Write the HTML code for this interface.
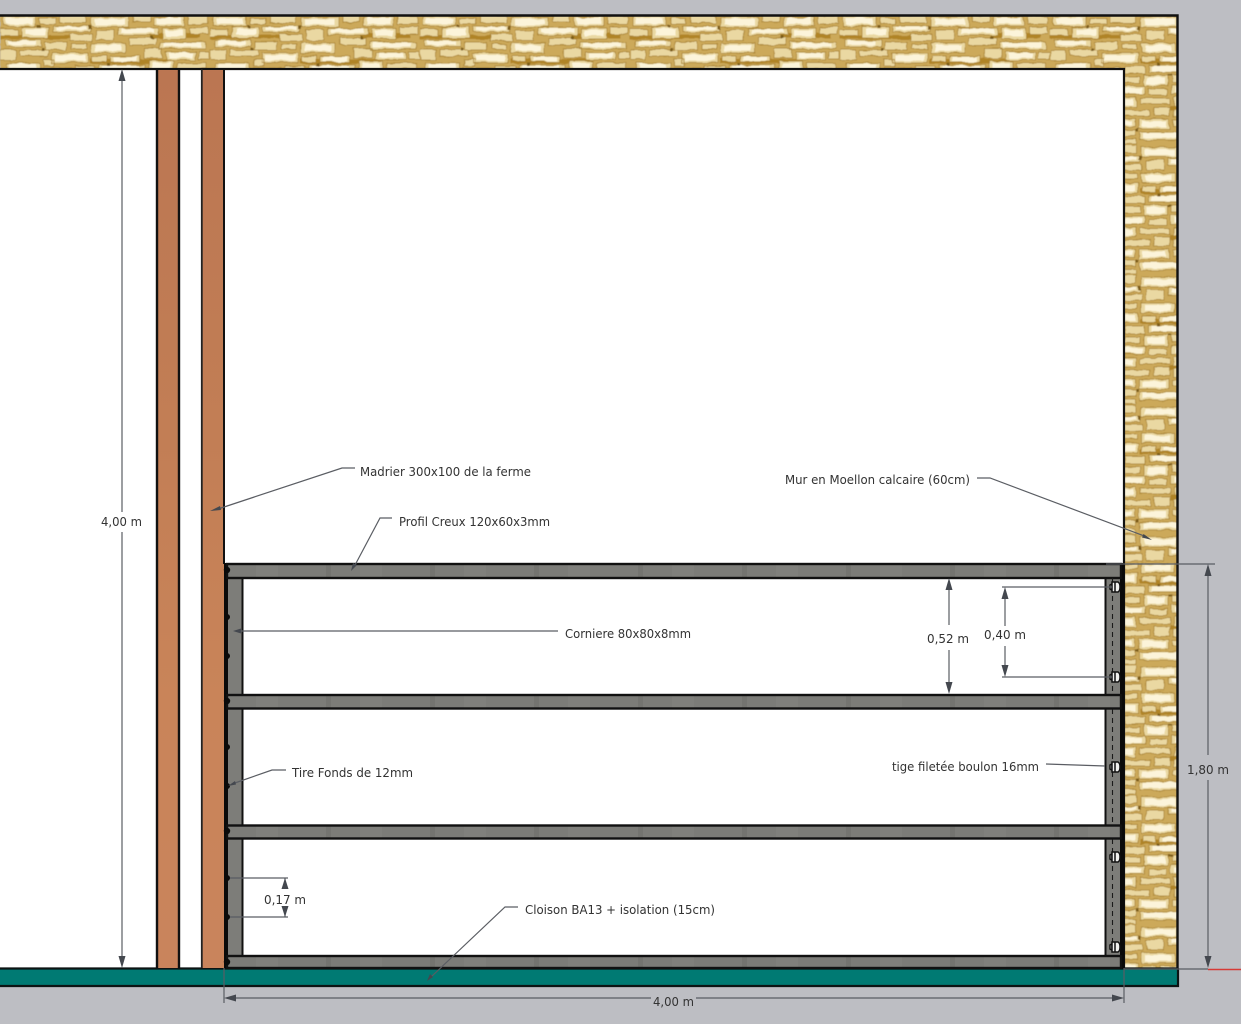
<!DOCTYPE html>
<html lang="fr"><head><meta charset="utf-8"><title>Plan</title>
<style>html,body{margin:0;padding:0;background:#bdbec3;width:1241px;height:1024px;overflow:hidden}svg{display:block;filter:blur(.3px)}text{font-family:"DejaVu Sans","Liberation Sans",sans-serif;font-size:12.5px;fill:#333}</style></head>
<body>
<svg width="1241" height="1024" viewBox="0 0 1241 1024" xmlns="http://www.w3.org/2000/svg">
<defs>
<filter id="b" x="0" y="0" width="100%" height="100%">
<feTurbulence type="fractalNoise" baseFrequency="0.09" numOctaves="2" seed="4" result="n"/>
<feDisplacementMap in="SourceGraphic" in2="n" scale="4" xChannelSelector="R" yChannelSelector="G"/>
<feGaussianBlur stdDeviation="0.6"/>
</filter>
<pattern id="stone" width="210" height="130" patternUnits="userSpaceOnUse" x="0" y="15">
<rect width="210" height="130" fill="#cca95a"/>
<path fill="#b08428" d="M0 20h70v4h-70zM90 44h80v5h-80zM30 72h60v6h-60zM120 90h70v5h-70zM10 112h60v5h-60zM150 18h50v5h-50z"/>
<path fill="#ead8a2" stroke="#a67f2c" stroke-width=".7" d="M3 1h33v10h-33zM40 3h16v6h-16zM60 0h26v8h-26zM91 2h38v10h-38zM133 0h17v7h-17zM154 2h30v9h-30zM188 1h20v8h-20zM0 14h18v7h-18zM22 12h27v11h-27zM53 11h37v6h-37zM70 19h22v7h-22zM96 15h18v10h-18zM118 13h40v7h-40zM162 13h24v11h-24zM190 12h18v7h-18zM5 25h36v7h-36zM45 27h22v8h-22zM72 29h15v5h-15zM91 28h34v10h-34zM129 23h27v7h-27zM160 27h46v7h-46zM0 35h16v10h-16zM20 35h28v6h-28zM52 38h36v10h-36zM92 41h14v6h-14zM110 41h30v6h-30zM144 33h18v10h-18zM166 37h30v8h-30zM199 37h10v7h-10zM6 48h34v8h-34zM44 44h10v7h-10zM44 53h27v6h-27zM75 51h20v8h-20zM99 50h46v7h-46zM149 46h24v11h-24zM177 48h29v6h-29zM0 59h26v6h-26zM30 62h40v9h-40zM74 62h16v6h-16zM94 60h24v11h-24zM122 60h31v7h-31zM157 60h20v9h-20zM181 57h25v9h-25zM3 68h22v10h-22zM29 74h30v6h-30zM63 71h32v8h-32zM99 74h18v6h-18zM121 70h45v9h-45zM170 72h34v7h-34zM0 81h38v8h-38zM42 83h16v7h-16zM62 82h24v10h-24zM90 83h30v6h-30zM124 82h18v9h-18zM146 82h36v6h-36zM186 82h20v9h-20zM6 92h20v7h-20zM30 93h30v9h-30zM64 95h36v6h-36zM104 92h16v9h-16zM124 94h44v8h-44zM172 91h16v9h-16zM192 94h16v6h-16zM0 102h26v10h-26zM30 105h18v6h-18zM52 104h33v8h-33zM89 104h30v10h-30zM123 105h22v6h-22zM149 105h38v7h-38zM191 103h17v10h-17zM4 115h34v7h-34zM42 114h20v10h-20zM66 115h20v6h-20zM90 117h44v8h-44zM138 114h16v7h-16zM158 115h26v10h-26zM188 116h20v6h-20zM0 124h30v5h-30zM66 124h20v5h-20zM138 124h16v5h-16z"/>
<path fill="#fff9e4" opacity=".85" d="M6 3h27v6h-27zM95 4h30v6h-30zM157 3h24v6h-24zM26 14h20v6h-20zM121 14h33v4h-33zM56 12h30v3h-30zM165 15h18v6h-18zM8 26h28v4h-28zM95 30h26v6h-26zM163 28h38v4h-38zM55 40h30v6h-30zM113 42h24v4h-24zM169 38h24v5h-24zM9 49h27v5h-27zM102 51h38v5h-38zM152 48h18v7h-18zM33 64h32v5h-32zM97 62h18v7h-18zM184 59h18v5h-18zM125 72h38v5h-38zM66 73h26v5h-26zM3 83h32v5h-32zM65 84h18v6h-18zM149 83h28v4h-28zM33 95h24v5h-24zM127 96h38v5h-38zM56 106h26v4h-26zM92 106h24v6h-24zM153 106h30v5h-30zM7 116h27v5h-27zM93 118h38v5h-38zM161 117h20v6h-20z"/>
<path fill="#7c5c18" d="M37 10h3v3h-3zM88 11h3v4h-3zM150 21h3v3h-3zM41 33h3v3h-3zM107 48h3v3h-3zM27 61h3v3h-3zM118 59h4v2h-4zM60 80h3v3h-3zM143 92h3v3h-3zM26 100h4v3h-4zM86 114h3v3h-3zM187 101h4v3h-4zM175 57h3v4h-3z"/>
</pattern>
<pattern id="railtex" width="104" height="16" patternUnits="userSpaceOnUse" x="300" y="0">
<rect width="104" height="16" fill="#7c7c78"/>
<rect x="26" width="5" height="16" fill="#747470"/>
<rect x="60" width="22" height="16" fill="#80807c"/>
</pattern>
<linearGradient id="wood" x1="0" y1="0" x2="0" y2="1"><stop offset="0" stop-color="#bb7652"/><stop offset=".4" stop-color="#c27e55"/><stop offset=".7" stop-color="#c98459"/><stop offset="1" stop-color="#c9845c"/></linearGradient>
</defs>

<rect width="1241" height="1024" fill="#bdbec3"/>

<!-- walls -->
<rect x="0" y="15" width="1178" height="954" fill="url(#stone)" filter="url(#b)"/>
<rect x="0" y="69" width="1124" height="900" fill="#fff"/>
<path d="M-2 15.500H1177.500V986" fill="none" stroke="#111" stroke-width="2.400"/>
<path d="M-2 69H1124V968" fill="none" stroke="#111" stroke-width="2.200"/>

<!-- floor -->
<rect x="0" y="968" width="1178" height="18" fill="#007a73"/>
<path d="M-2 968.500H1178M-2 986H1178V968" fill="none" stroke="#0c1414" stroke-width="2.200"/>

<!-- timbers -->
<rect x="157" y="70" width="22" height="898" fill="url(#wood)"/>
<rect x="202" y="70" width="22" height="898" fill="url(#wood)"/>
<path d="M157 69V968M179 69V968" stroke="#111" stroke-width="2.400" fill="none"/>
<path d="M201.800 69V968" stroke="#222" stroke-width="1.800" fill="none"/>
<path d="M224 69V564" stroke="#111" stroke-width="2" fill="none"/>

<!-- frame -->
<rect x="224" y="563" width="4" height="405" fill="#0a0a0a"/>
<rect x="228" y="578" width="15" height="380" fill="#7d7d79"/>
<rect x="1105" y="578" width="16" height="380" fill="#7d7d79"/>
<path d="M242.500 578V956M1105.500 578V956" stroke="#111" stroke-width="2"/>
<rect x="1120" y="563" width="4.500" height="406" fill="#0a0a0a"/>
<g stroke="#111" stroke-width="2.400" fill="url(#railtex)">
<rect x="227" y="564" width="894" height="14"/>
<rect x="227" y="695" width="894" height="13.500"/>
<rect x="227" y="825.500" width="894" height="13"/>
<rect x="227" y="956" width="894" height="12"/>
</g>
<g fill="#0a0a0a">
<circle cx="227" cy="570" r="3.200"/><circle cx="227" cy="617" r="3"/><circle cx="227" cy="656" r="3"/><circle cx="227" cy="701" r="3.200"/><circle cx="227" cy="747" r="3"/><circle cx="227" cy="786" r="3"/><circle cx="227" cy="831" r="3.200"/><circle cx="227" cy="878" r="3"/><circle cx="227" cy="917" r="3"/><circle cx="227" cy="962" r="3.200"/>
</g>
<!-- threaded rods -->
<path d="M1112.500 578V694M1112.500 709V824M1112.500 839V955" stroke="#1a1a1a" stroke-width="1.100" stroke-dasharray="5 4"/>
<g fill="#f0f0ee" stroke="#111" stroke-width="1.500">
<path d="M1110 585l2-1v6l-2-1z"/><path d="M1112 582h3v10h-3zM1115 582h3q2 1 2 5t-2 5h-3z"/>
<path d="M1110 675l2-1v6l-2-1z"/><path d="M1112 672h3v10h-3zM1115 672h3q2 1 2 5t-2 5h-3z"/>
<path d="M1110 765l2-1v6l-2-1z"/><path d="M1112 762h3v10h-3zM1115 762h3q2 1 2 5t-2 5h-3z"/>
<path d="M1110 855l2-1v6l-2-1z"/><path d="M1112 852h3v10h-3zM1115 852h3q2 1 2 5t-2 5h-3z"/>
<path d="M1110 945l2-1v6l-2-1z"/><path d="M1112 942h3v10h-3zM1115 942h3q2 1 2 5t-2 5h-3z"/>
</g>

<!-- dimension lines -->
<g stroke="#5a5d63" stroke-width="1.200" fill="none">
<path d="M122 80V512M122 532V957"/>
<path d="M949 589V625M949 650V683"/>
<path d="M1005 597V626M1005 646V667M1002 587H1112M1002 677H1112"/>
<path d="M230 878H288M230 917H288M285 878V888M285 907V917"/>
<path d="M1208 575V755M1208 780V957M1106 564H1215M1124 969H1208M224 968V1003M1124 968V1003M235 998H651M696 998H1113"/>
<!-- leaders -->
<path d="M355 468H342L218 509"/>
<path d="M977 478H990L1147 537"/>
<path d="M392 518H380L354 567"/>
<path d="M558 631H240"/>
<path d="M286 770H272L232 784"/>
<path d="M518 907H505L431 977"/>
<path d="M1046 764L1105 766"/>
</g>
<path d="M1208 969.500H1241" stroke="#d63a36" stroke-width="1.400"/>
<g fill="#44484f">
<path d="M122 69l-3.500 12h7z"/><path d="M122 968l-3.500-12h7z"/>
<path d="M949 578l-3.500 12h7z"/><path d="M949 694l-3.500-12h7z"/>
<path d="M1005 587l-3.500 12h7z"/><path d="M1005 677l-3.500-12h7z"/>
<path d="M285 878l-3.500 11h7z"/><path d="M285 917l-3.500-11h7z"/>
<path d="M1208 564l-3.500 12h7z"/><path d="M1208 968l-3.500-12h7z"/>
<path d="M224 998l12-3.500v7z"/><path d="M1124 998l-12-3.500v7z"/>
<path d="M210 511l10-5 1 4z"/><path d="M1152 540l-10-2.500 1.500-3.500z"/><path d="M351 571l2-8 4 2z"/><path d="M233 631l8-2.500v5z"/><path d="M228 786l7-5 1 3.500z"/><path d="M427 981l3-7 3 3z"/>
</g>

<!-- labels -->
<text x="360" y="476" textLength="171" lengthAdjust="spacingAndGlyphs">Madrier 300x100 de la ferme</text>
<text x="785" y="484" textLength="185" lengthAdjust="spacingAndGlyphs">Mur en Moellon calcaire (60cm)</text>
<text x="399" y="526" textLength="151" lengthAdjust="spacingAndGlyphs">Profil Creux 120x60x3mm</text>
<text x="565" y="638" textLength="126" lengthAdjust="spacingAndGlyphs">Corniere 80x80x8mm</text>
<text x="292" y="777" textLength="121" lengthAdjust="spacingAndGlyphs">Tire Fonds de 12mm</text>
<text x="892" y="771" textLength="147" lengthAdjust="spacingAndGlyphs">tige filetée boulon 16mm</text>
<text x="525" y="914" textLength="190" lengthAdjust="spacingAndGlyphs">Cloison BA13 + isolation (15cm)</text>
<text x="101" y="526" textLength="41" lengthAdjust="spacingAndGlyphs">4,00 m</text>
<text x="927" y="643" textLength="42" lengthAdjust="spacingAndGlyphs">0,52 m</text>
<text x="984" y="639" textLength="42" lengthAdjust="spacingAndGlyphs">0,40 m</text>
<text x="264" y="904" textLength="42" lengthAdjust="spacingAndGlyphs">0,17 m</text>
<text x="1187" y="774" textLength="42" lengthAdjust="spacingAndGlyphs">1,80 m</text>
<text x="653" y="1006" textLength="41" lengthAdjust="spacingAndGlyphs">4,00 m</text>
</svg>
</body></html>
